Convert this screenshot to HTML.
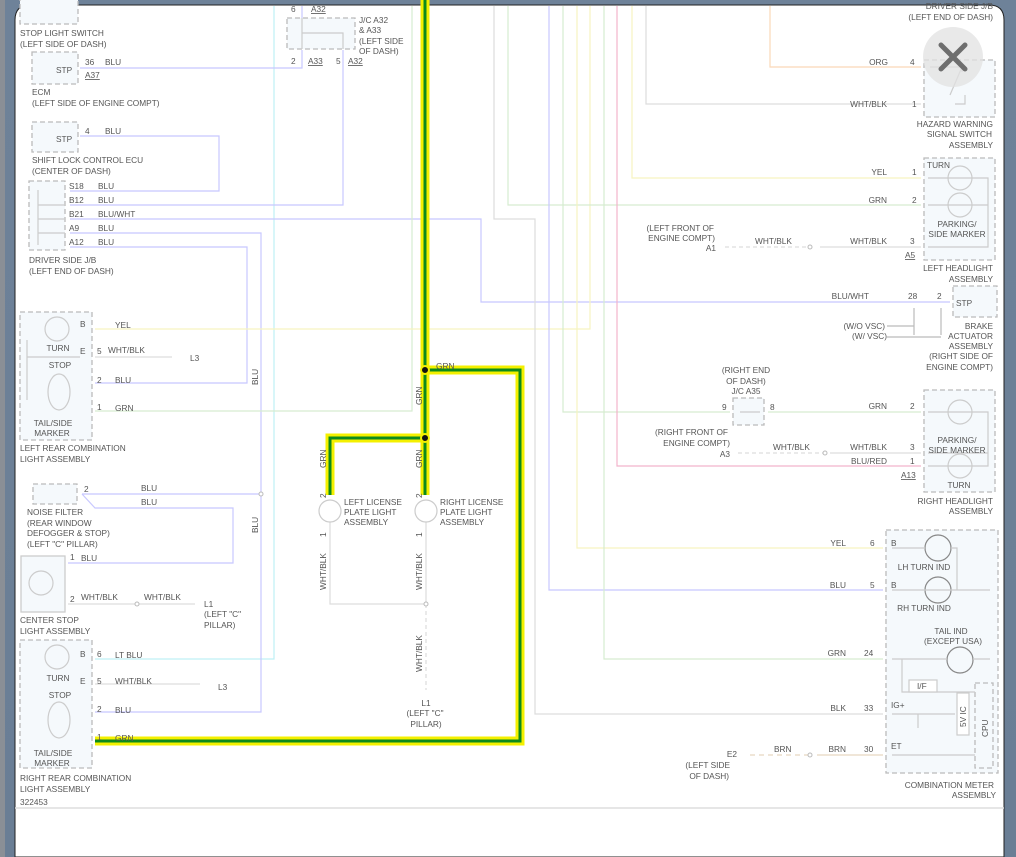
<!DOCTYPE html>
<html><head><meta charset="utf-8"><style>
html,body{margin:0;padding:0;width:1016px;height:857px;overflow:hidden;background:#6b7f96}
svg{display:block}
text{font-family:"Liberation Sans",sans-serif;font-size:8.3px;fill:#555}
.r{text-anchor:end}.c{text-anchor:middle}
.bx{fill:#f5f9fc;stroke:#bbb;stroke-width:1.3;stroke-dasharray:5 3}
.g{stroke:#ccc;fill:none;stroke-width:1.2}
</style></head><body>
<svg width="1016" height="857" viewBox="0 0 1016 857">
<defs><linearGradient id="bg" x1="0" x2="0" y1="0" y2="1"><stop offset="0" stop-color="#6e8299"/><stop offset="1" stop-color="#6a7e95"/></linearGradient></defs>
<rect width="1016" height="857" fill="url(#bg)"/>
<rect x="0" y="0" width="5" height="857" fill="#8a8f96"/>
<path d="M15 857 V20 Q15 5 30 5 H989 Q1004 5 1004 20 V857 Z" fill="#fff" stroke="#222" stroke-width="1"/>
<line x1="15" y1="808" x2="1004" y2="808" stroke="#ddd" stroke-width="1.5"/>

<g fill="none" stroke-width="1.2">
<path d="M274 6V659H95" stroke="#bff0f5"/>
<path d="M80 68H302V50M302 6V18" stroke="#c8c8ff"/>
<path d="M80 136H219V191H70" stroke="#c8c8ff"/>
<path d="M70 205H343V50" stroke="#c8c8ff"/>
<path d="M70 219H481V302H950" stroke="#c8c8ff"/>
<path d="M70 233H261V712H95" stroke="#c8c8ff"/>
<path d="M70 247H247V383H95" stroke="#c8c8ff"/>
<path d="M412 6V411H95" stroke="#d6ecd0"/>
<path d="M95 329H590V6" stroke="#f6f4c0"/>
<path d="M494 6V219H535V714H883" stroke="#ddd"/>
<path d="M508 6V205H921" stroke="#d6ecd0"/>
<path d="M549 6V590H883" stroke="#c8c8ff"/>
<path d="M563 6V412H730M768 412H921" stroke="#d6ecd0"/>
<path d="M577 6V548H883" stroke="#f6f4c0"/>
<path d="M604 6V659H883" stroke="#d6ecd0"/>
<path d="M617 6V466H921" stroke="#f2b4cc"/>
<path d="M632 6V178H921" stroke="#f6f4c0"/>
<path d="M646 6V104H921" stroke="#ddd"/>
<path d="M770 6V67H921" stroke="#fbd8b8"/>
<path d="M82 494H261M82 494L95 508H233V563H68" stroke="#c8c8ff"/>
<path d="M95 357H172M95 684H200" stroke="#ddd"/>
<path d="M68 604H195M330 522V604H426V522" stroke="#ddd"/>
<path d="M426 604V690" stroke="#ddd" stroke-dasharray="4 3"/>
<path d="M725 247H810" stroke="#ddd" stroke-dasharray="4 3"/>
<path d="M820 247H921M830 453H921" stroke="#ddd"/>
<path d="M738 453H825" stroke="#ddd" stroke-dasharray="4 3"/>
<path d="M750 755H810" stroke="#e8d8c0" stroke-dasharray="5 4"/>
<path d="M817 755H883" stroke="#e8d8c0"/>
<path d="M914 335V308M941 335V308M887 326H914M887 337H941" stroke="#bbb"/>
</g>
<g fill="#fff" stroke="#bbb"><circle cx="261" cy="494" r="2"/><circle cx="137" cy="604" r="2"/><circle cx="426" cy="604" r="2"/><circle cx="810" cy="247" r="2"/><circle cx="825" cy="453" r="2"/><circle cx="810" cy="755" r="2"/></g>

<rect class="bx" x="20" y="-5" width="58" height="29"/>
<rect class="bx" x="32" y="52" width="46" height="32"/>
<rect class="bx" x="32" y="122" width="46" height="30"/>
<rect class="bx" x="29" y="181" width="36" height="69"/>
<rect class="bx" x="287" y="18" width="68" height="31"/>
<rect class="bx" x="20" y="312" width="72" height="128"/>
<rect class="bx" x="33" y="484" width="44" height="20"/>
<rect x="21" y="556" width="44" height="56" fill="#f5f9fc" stroke="#ccc" stroke-width="1.3"/>
<rect class="bx" x="20" y="640" width="72" height="128"/>
<rect class="bx" x="924" y="60" width="71" height="57"/>
<rect class="bx" x="924" y="158" width="71" height="102"/>
<rect class="bx" x="953" y="286" width="44" height="31"/>
<rect class="bx" x="733" y="398" width="31" height="27"/>
<rect class="bx" x="924" y="390" width="71" height="102"/>
<rect class="bx" x="886" y="530" width="112" height="243"/>
<rect class="bx" x="975" y="683" width="18" height="85"/>
<g class="g">
<circle cx="57" cy="329" r="12"/><ellipse cx="59" cy="392" rx="11" ry="18"/>
<circle cx="57" cy="657" r="12"/><ellipse cx="59" cy="720" rx="11" ry="18"/>
<circle cx="41" cy="583" r="12"/>
<circle cx="330" cy="511" r="11"/><circle cx="426" cy="511" r="11"/>
<circle cx="960" cy="178" r="12"/><circle cx="960" cy="205" r="12"/>
<circle cx="960" cy="412" r="12"/><circle cx="960" cy="466" r="12"/>
<circle cx="938" cy="548" r="13" stroke="#888"/><circle cx="938" cy="590" r="13" stroke="#888"/><circle cx="960" cy="660" r="13" stroke="#888"/>
<path d="M27 340V400M27 357H80M38 190V245M38 205H65M38 219H65M38 233H65M302 18V49M302 33H343V49"/>
<path d="M930 67H962L950 95M962 67V72M955 104H965V95"/>
<path d="M928 178H988V247H928M928 205H988M928 412H988V466H928M928 453H988"/>
<path d="M892 548H925M951 548H957V590H892M957 590H990M892 659H947M973 659H990M902 659V692H975M892 714H955M918 714V728M892 755H975"/>
<rect x="909" y="680" width="28" height="12" fill="#fff"/><rect x="957" y="693" width="12" height="42" fill="#fff"/>
<path d="M740 412H760"/>
</g>

<g fill="none" stroke-linejoin="miter">
<path d="M425 0V495M425 370H520V741H95M425 438H330V495" stroke="#f4f000" stroke-width="9"/>
<path d="M425 0V495M425 370H520V741H95M425 438H330V495" stroke="#0d8a1c" stroke-width="3"/>
</g>
<circle cx="425" cy="370" r="4" fill="#111" stroke="#f4f000" stroke-width="2"/>
<circle cx="425" cy="438" r="4" fill="#111" stroke="#f4f000" stroke-width="2"/>

<circle cx="953" cy="57" r="30" fill="rgba(225,225,225,0.75)"/>
<path d="M941 45L965 69M965 45L941 69" stroke="#6e6e6e" stroke-width="5" stroke-linecap="round"/>

<text x="20" y="36">STOP LIGHT SWITCH</text><text x="20" y="47">(LEFT SIDE OF DASH)</text>
<text x="56" y="73">STP</text><text x="85" y="65">36</text><text x="105" y="65">BLU</text><text x="85" y="78" text-decoration="underline">A37</text>
<text x="32" y="95">ECM</text><text x="32" y="106">(LEFT SIDE OF ENGINE COMPT)</text>
<text x="56" y="142">STP</text><text x="85" y="134">4</text><text x="105" y="134">BLU</text>
<text x="32" y="163">SHIFT LOCK CONTROL ECU</text><text x="32" y="174">(CENTER OF DASH)</text>
<text x="69" y="189">S18</text><text x="98" y="189">BLU</text>
<text x="69" y="203">B12</text><text x="98" y="203">BLU</text>
<text x="69" y="217">B21</text><text x="98" y="217">BLU/WHT</text>
<text x="69" y="231">A9</text><text x="98" y="231">BLU</text>
<text x="69" y="245">A12</text><text x="98" y="245">BLU</text>
<text x="29" y="263">DRIVER SIDE J/B</text><text x="29" y="274">(LEFT END OF DASH)</text>
<text x="291" y="12">6</text><text x="311" y="12" text-decoration="underline">A32</text>
<text x="291" y="64">2</text><text x="308" y="64" text-decoration="underline">A33</text><text x="336" y="64">5</text><text x="348" y="64" text-decoration="underline">A32</text>
<text x="359" y="23">J/C A32</text><text x="359" y="33">&amp; A33</text><text x="359" y="44">(LEFT SIDE</text><text x="359" y="54">OF DASH)</text>

<text x="80" y="327">B</text><text x="115" y="328">YEL</text>
<text class="c" x="58" y="351">TURN</text><text x="80" y="354">E</text><text x="97" y="354">5</text><text x="108" y="353">WHT/BLK</text>
<text class="c" x="60" y="368">STOP</text><text x="190" y="361">L3</text>
<text x="97" y="383">2</text><text x="115" y="383">BLU</text><text x="97" y="410">1</text><text x="115" y="411">GRN</text>
<text class="c" x="53" y="426">TAIL/SIDE</text><text class="c" x="52" y="436">MARKER</text>
<text x="20" y="451">LEFT REAR COMBINATION</text><text x="20" y="462">LIGHT ASSEMBLY</text>
<text x="84" y="492">2</text><text x="141" y="491">BLU</text><text x="141" y="505">BLU</text>
<text x="27" y="515">NOISE FILTER</text><text x="27" y="526">(REAR WINDOW</text><text x="27" y="536">DEFOGGER &amp; STOP)</text><text x="27" y="547">(LEFT "C" PILLAR)</text>
<text x="70" y="560">1</text><text x="81" y="561">BLU</text><text x="70" y="602">2</text><text x="81" y="600">WHT/BLK</text><text x="144" y="600">WHT/BLK</text>
<text x="204" y="607">L1</text><text x="204" y="617">(LEFT "C"</text><text x="204" y="628">PILLAR)</text>
<text x="20" y="623">CENTER STOP</text><text x="20" y="634">LIGHT ASSEMBLY</text>
<text x="80" y="657">B</text><text x="97" y="657">6</text><text x="115" y="658">LT BLU</text>
<text class="c" x="58" y="681">TURN</text><text x="80" y="684">E</text><text x="97" y="684">5</text><text x="115" y="684">WHT/BLK</text><text x="218" y="690">L3</text>
<text class="c" x="60" y="698">STOP</text><text x="97" y="712">2</text><text x="115" y="713">BLU</text>
<text x="97" y="740">1</text><text x="115" y="741">GRN</text>
<text class="c" x="53" y="756">TAIL/SIDE</text><text class="c" x="52" y="766">MARKER</text>
<text x="20" y="781">RIGHT REAR COMBINATION</text><text x="20" y="792">LIGHT ASSEMBLY</text><text x="20" y="805">322453</text>
<text transform="translate(258,385) rotate(-90)">BLU</text><text transform="translate(258,533) rotate(-90)">BLU</text>
<text transform="translate(422,405) rotate(-90)">GRN</text><text transform="translate(326,468) rotate(-90)">GRN</text><text transform="translate(422,468) rotate(-90)">GRN</text>
<text transform="translate(326,498) rotate(-90)">2</text><text transform="translate(422,498) rotate(-90)">2</text>
<text transform="translate(326,537) rotate(-90)">1</text><text transform="translate(422,537) rotate(-90)">1</text>
<text transform="translate(326,590) rotate(-90)">WHT/BLK</text><text transform="translate(422,590) rotate(-90)">WHT/BLK</text><text transform="translate(422,672) rotate(-90)">WHT/BLK</text>
<text x="436" y="369">GRN</text>
<text x="344" y="505">LEFT LICENSE</text><text x="344" y="515">PLATE LIGHT</text><text x="344" y="525">ASSEMBLY</text>
<text x="440" y="505">RIGHT LICENSE</text><text x="440" y="515">PLATE LIGHT</text><text x="440" y="525">ASSEMBLY</text>
<text class="c" x="426" y="706">L1</text><text class="c" x="425" y="716">(LEFT "C"</text><text class="c" x="426" y="727">PILLAR)</text>

<text class="r" x="993" y="9">DRIVER SIDE J/B</text><text class="r" x="993" y="20">(LEFT END OF DASH)</text>
<text class="r" x="888" y="65">ORG</text><text x="910" y="65">4</text>
<text class="r" x="887" y="107">WHT/BLK</text><text x="912" y="107">1</text>
<text class="r" x="993" y="127">HAZARD WARNING</text><text class="r" x="992" y="137">SIGNAL SWITCH</text><text class="r" x="993" y="148">ASSEMBLY</text>
<text x="927" y="168">TURN</text><text class="r" x="887" y="175">YEL</text><text x="912" y="175">1</text>
<text class="r" x="887" y="203">GRN</text><text x="912" y="203">2</text>
<text class="c" x="957" y="227">PARKING/</text><text class="c" x="957" y="237">SIDE MARKER</text>
<text class="r" x="714" y="231">(LEFT FRONT OF</text><text class="r" x="715" y="241">ENGINE COMPT)</text><text class="r" x="716" y="251">A1</text>
<text x="755" y="244">WHT/BLK</text><text class="r" x="887" y="244">WHT/BLK</text><text x="910" y="244">3</text>
<text x="905" y="258" text-decoration="underline">A5</text>
<text class="r" x="993" y="271">LEFT HEADLIGHT</text><text class="r" x="993" y="282">ASSEMBLY</text>
<text class="r" x="869" y="299">BLU/WHT</text><text x="908" y="299">28</text><text x="937" y="299">2</text><text x="956" y="306">STP</text>
<text class="r" x="885" y="329">(W/O VSC)</text><text class="r" x="887" y="339">(W/ VSC)</text>
<text class="r" x="993" y="329">BRAKE</text><text class="r" x="993" y="339">ACTUATOR</text><text class="r" x="993" y="349">ASSEMBLY</text><text class="r" x="993" y="359">(RIGHT SIDE OF</text><text class="r" x="993" y="370">ENGINE COMPT)</text>
<text class="c" x="746" y="373">(RIGHT END</text><text class="c" x="746" y="384">OF DASH)</text><text class="c" x="746" y="394">J/C A35</text>
<text x="722" y="410">9</text><text x="770" y="410">8</text>
<text class="r" x="887" y="409">GRN</text><text x="910" y="409">2</text>
<text class="c" x="957" y="443">PARKING/</text><text class="c" x="957" y="453">SIDE MARKER</text>
<text class="r" x="728" y="435">(RIGHT FRONT OF</text><text class="r" x="730" y="446">ENGINE COMPT)</text><text class="r" x="730" y="457">A3</text>
<text x="773" y="450">WHT/BLK</text><text class="r" x="887" y="450">WHT/BLK</text><text x="910" y="450">3</text>
<text class="r" x="887" y="464">BLU/RED</text><text x="910" y="464">1</text><text x="901" y="478" text-decoration="underline">A13</text>
<text class="c" x="959" y="488">TURN</text>
<text class="r" x="993" y="504">RIGHT HEADLIGHT</text><text class="r" x="993" y="514">ASSEMBLY</text>
<text class="r" x="846" y="546">YEL</text><text x="870" y="546">6</text><text x="891" y="546">B</text>
<text class="c" x="924" y="570">LH TURN IND</text>
<text class="r" x="846" y="588">BLU</text><text x="870" y="588">5</text><text x="891" y="588">B</text>
<text class="c" x="924" y="611">RH TURN IND</text>
<text class="c" x="951" y="634">TAIL IND</text><text class="c" x="953" y="644">(EXCEPT USA)</text>
<text class="r" x="846" y="656">GRN</text><text x="864" y="656">24</text>
<text x="917" y="689">I/F</text>
<text class="r" x="846" y="711">BLK</text><text x="864" y="711">33</text><text x="891" y="708">IG+</text>
<text transform="translate(966,727) rotate(-90)">5V IC</text><text transform="translate(988,737) rotate(-90)">CPU</text>
<text class="r" x="737" y="757">E2</text><text x="774" y="752">BRN</text><text class="r" x="846" y="752">BRN</text><text x="864" y="752">30</text><text x="891" y="749">ET</text>
<text class="r" x="730" y="768">(LEFT SIDE</text><text class="r" x="729" y="779">OF DASH)</text>
<text class="r" x="994" y="788">COMBINATION METER</text><text class="r" x="996" y="798">ASSEMBLY</text>
</svg>
</body></html>
